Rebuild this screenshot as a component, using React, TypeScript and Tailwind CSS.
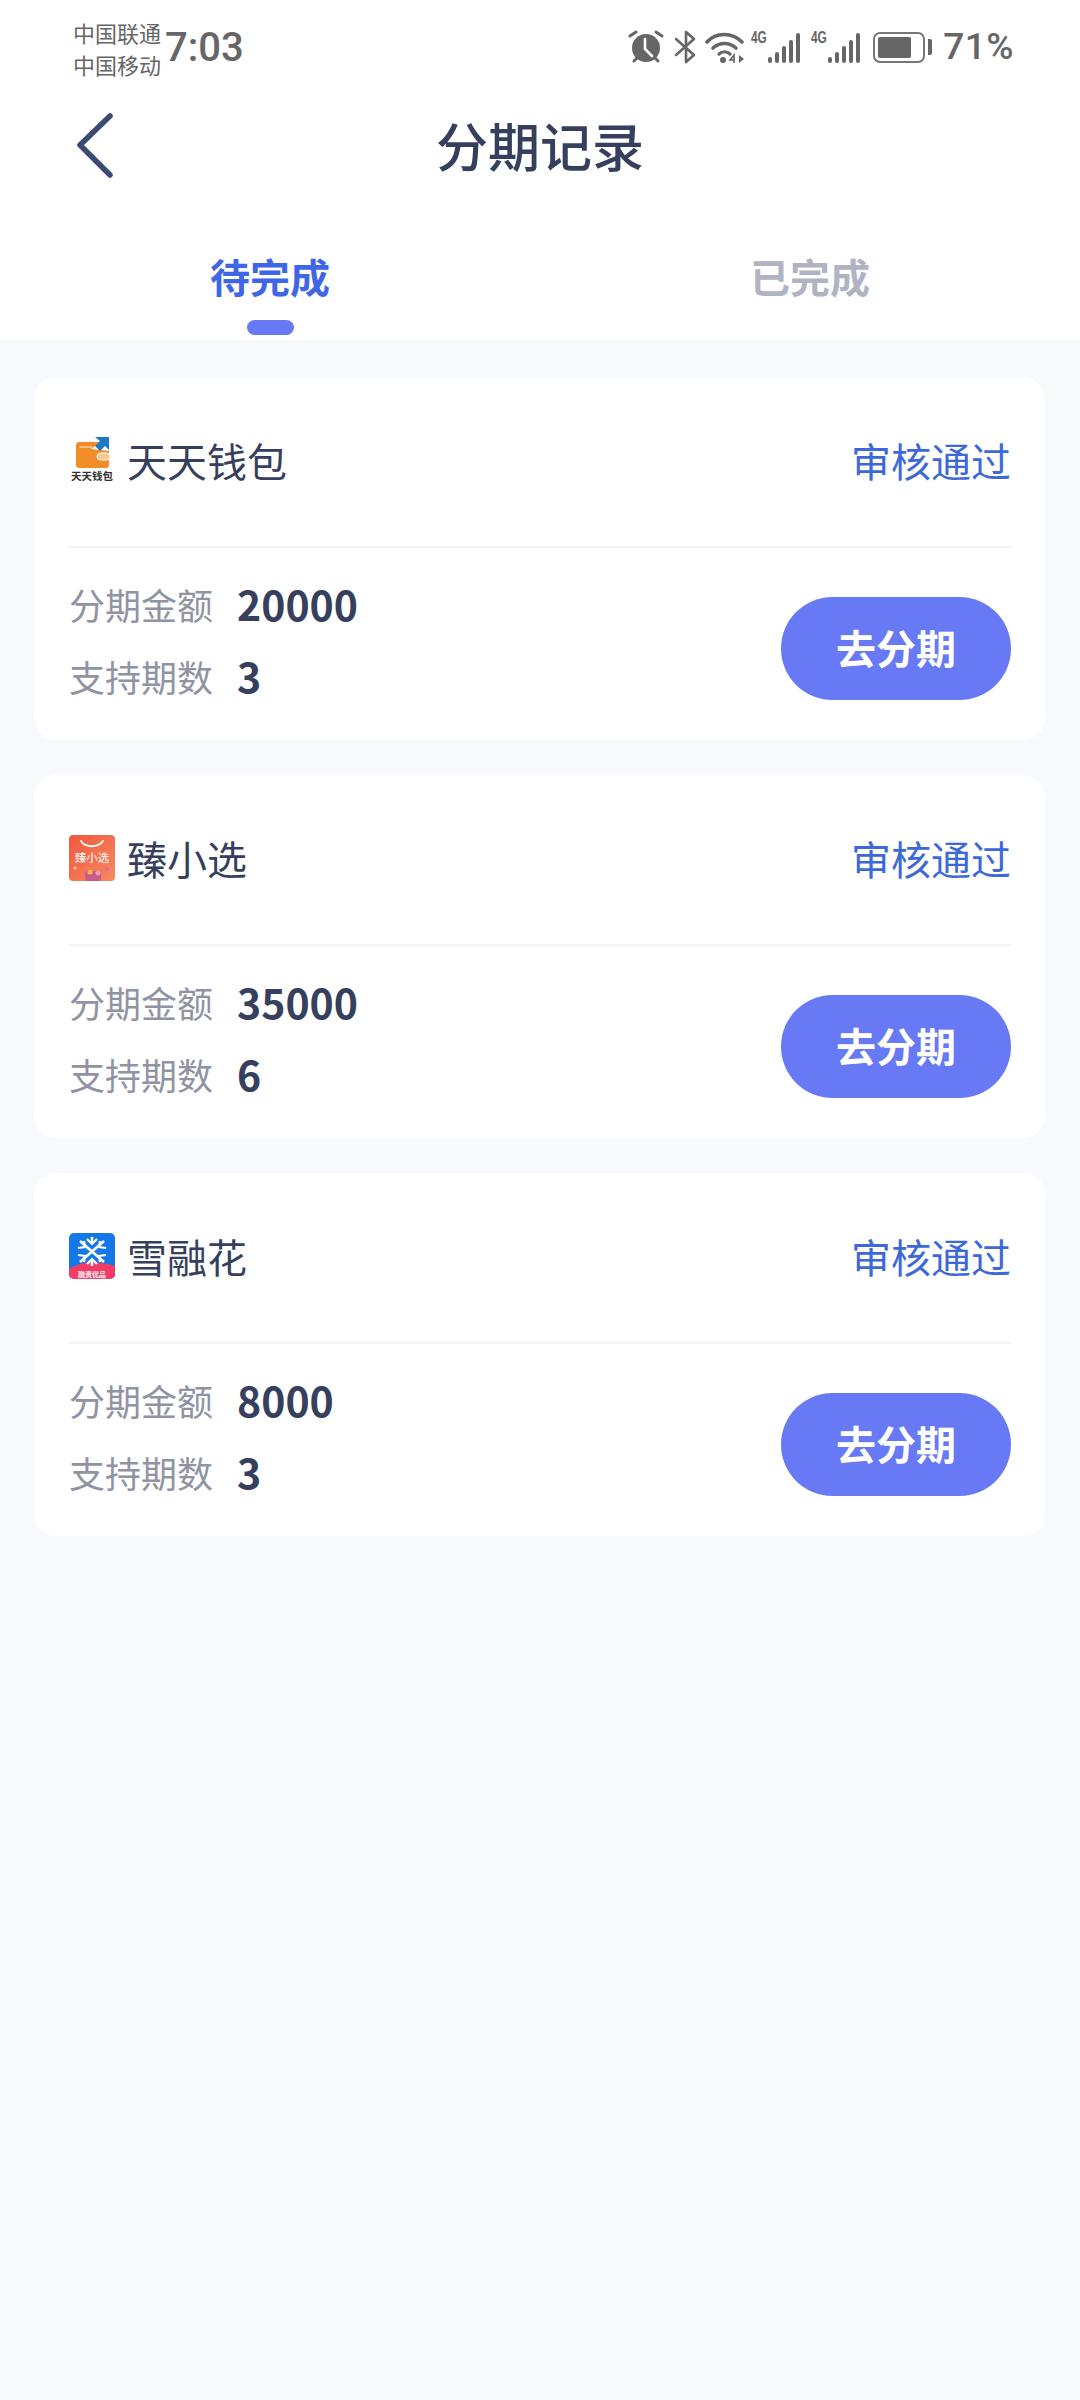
const fontStack = { fontFamily: '"Noto Sans CJK SC", "Noto Sans", sans-serif' };

// ====== Status bar icons ======
const AlarmIcon = () => (
  <svg width="36" height="34" viewBox="0 0 36 34" fill="none">
    <circle cx="18" cy="18" r="14" fill="#666" />
    <path d="M17 9v10l7 7" stroke="#fff" strokeWidth="2.6" strokeLinecap="round" />
    <path d="M2 6l6-4M34 6l-6-4M6 31l3-3M30 31l-3-3" stroke="#666" strokeWidth="3" strokeLinecap="round" />
  </svg>
);

const BluetoothIcon = () => (
  <svg width="22" height="34" viewBox="0 0 22 34" fill="none">
    <path d="M2 9l18 16-8 7V2l8 7L2 25" stroke="#666" strokeWidth="2.6" strokeLinejoin="round" strokeLinecap="round" />
  </svg>
);

const WifiIcon = () => (
  <svg width="40" height="32" viewBox="0 0 40 32" fill="none">
    <path d="M2 11C11 1 27 1 37 11" stroke="#666" strokeWidth="3.6" strokeLinecap="round" />
    <path d="M8 17c7-6 16-6 23 0" stroke="#666" strokeWidth="3.6" strokeLinecap="round" />
    <path d="M14 23c3-3 8-3 11 0" stroke="#666" strokeWidth="3.2" strokeLinecap="round" />
    <circle cx="18" cy="29" r="3" fill="#666" />
    <path d="M29 32V24l-4 5h5" stroke="#666" strokeWidth="1.6" />
    <path d="M34 24l5 4-5 4z" fill="#666" />
  </svg>
);

const SignalIcon = () => (
  <div className="relative h-[32px] w-[32px]">
    <span
      className="absolute left-[-17px] top-[-1px] origin-left text-[17px] leading-[15px] font-bold text-[#666]"
      style={{ fontFamily: '"Liberation Sans", sans-serif', transform: "scaleX(0.7)" }}
    >
      4G
    </span>
    <div className="flex h-full items-end gap-[3px]">
      <div className="h-[6px] w-[4px] rounded-full bg-[#666]" />
      <div className="h-[11px] w-[4px] rounded-full bg-[#666]" />
      <div className="h-[17px] w-[4px] rounded-full bg-[#666]" />
      <div className="h-[23px] w-[4px] rounded-full bg-[#666]" />
      <div className="h-[30px] w-[4px] rounded-full bg-[#666]" />
    </div>
  </div>
);

const BatteryIcon = () => (
  <div className="flex items-center gap-[3px]">
    <div className="h-[31px] w-[52px] rounded-[7px] border-2 border-[#777] p-[3px]">
      <div className="h-full w-[33px] rounded-[2px] bg-[#666]" />
    </div>
    <div className="h-[16px] w-[4px] rounded-r-[2px] bg-[#666]" />
  </div>
);

// ====== Card logos ======
const WalletLogo = () => (
  <svg width="46" height="46" viewBox="0 0 46 46" className="shrink-0">
    <rect x="7" y="5" width="33" height="26" rx="3" fill="#f28c28" />
    <path d="M10 10h13" stroke="#fcdcb4" strokeWidth="1.2" />
    <path d="M22 12l4-3h14v5z" fill="#fff" />
    <path d="M26 0h14v13l-4-4-5 5-5-5 5-5z" fill="#1d78c4" />
    <rect x="28" y="16" width="13" height="7" rx="3.5" fill="#f9c88f" stroke="#fff" strokeWidth="1" />
    <text x="23" y="43" textAnchor="middle" fontSize="10.5" fontWeight="700" fill="#333" style={fontStack}>
      天天钱包
    </text>
  </svg>
);

const ZhenLogo = () => (
  <svg width="46" height="46" viewBox="0 0 46 46" className="shrink-0">
    <defs>
      <linearGradient id="zhen" x1="0" y1="0" x2="1" y2="1">
        <stop offset="0" stopColor="#f0583e" />
        <stop offset="1" stopColor="#f98a62" />
      </linearGradient>
    </defs>
    <rect width="46" height="46" rx="4" fill="url(#zhen)" />
    <path d="M12 6c4 7 17 7 22 0" fill="none" stroke="#fff" strokeWidth="1.8" strokeLinecap="round" />
    <text x="23" y="27" textAnchor="middle" fontSize="11.5" fill="#fff" style={fontStack}>
      臻小选
    </text>
    <circle cx="6" cy="33" r="1.5" fill="#ffd0c0" />
    <circle cx="38" cy="34" r="2" fill="#e86a9a" />
    <rect x="16" y="36" width="16" height="10" rx="2" fill="#c95a8a" />
    <circle cx="21" cy="37" r="2.5" fill="#f8b74e" />
    <circle cx="29" cy="38" r="2.5" fill="#f49ab5" />
  </svg>
);

const SnowLogo = () => (
  <svg width="46" height="46" viewBox="0 0 46 46" className="shrink-0">
    <rect width="46" height="46" rx="5" fill="#1478e8" />
    <path d="M0 36c12-8 30-8 46-3v8a5 5 0 0 1-5 5H5a5 5 0 0 1-5-5z" fill="#f23c64" />
    <path d="M11 8l24 21M35 8L11 29M23 4v6M23 27v6" stroke="#fff" strokeWidth="2.6" fill="none" />
    <path d="M18 6l5 5 5-5M18 31l5-5 5 5M9 15l7-1-1-6M37 15l-7-1 1-6M9 22l7 1-1 6M37 22l-7 1 1 6" stroke="#fff" strokeWidth="2.2" fill="none" />
    <text x="23" y="44" textAnchor="middle" fontSize="7" fontWeight="700" fill="#fff" style={fontStack}>
      融资优品
    </text>
  </svg>
);

const records = [
  { name: "天天钱包", Logo: WalletLogo, amount: "20000", periods: "3" },
  { name: "臻小选", Logo: ZhenLogo, amount: "35000", periods: "6" },
  { name: "雪融花", Logo: SnowLogo, amount: "8000", periods: "3" },
];

export default function App() {
  return (
    <div className="flex min-h-[2400px] w-[1080px] flex-col bg-[#f8f9fd]" style={fontStack}>
      <div className="bg-white">
        {/* status bar */}
        <div className="flex h-[90px] items-start justify-between pl-[73px] pr-[66px] pt-[16px]">
          <div className="flex items-center gap-[4px]">
            <div className="text-[22px] leading-[32px] text-[#666]">
              <div>中国联通</div>
              <div>中国移动</div>
            </div>
            <span className="text-[40px] leading-[64px] font-medium text-[#666]" style={{ fontFamily: "Roboto, sans-serif" }}>
              7:03
            </span>
          </div>
          <div className="flex h-[62px] items-center">
            <AlarmIcon />
            <div className="ml-[10px]"><BluetoothIcon /></div>
            <div className="ml-[9px]"><WifiIcon /></div>
            <div className="ml-[23px]"><SignalIcon /></div>
            <div className="ml-[28px]"><SignalIcon /></div>
            <div className="ml-[13px]"><BatteryIcon /></div>
            <span className="ml-[11px] text-[37px] font-medium tracking-[0.5px] text-[#666]" style={{ fontFamily: "Roboto, sans-serif" }}>
              71%
            </span>
          </div>
        </div>

        {/* title bar */}
        <div className="relative flex h-[110px] items-center justify-center">
          <svg width="40" height="68" viewBox="0 0 40 68" fill="none" className="absolute left-[76px] top-[23px]">
            <path d="M34 3L4 32l30 30" stroke="#3a4a75" strokeWidth="5.5" strokeLinecap="round" strokeLinejoin="round" />
          </svg>
          <h1 className="text-[52px] leading-[70px] font-medium text-[#373f5e]">分期记录</h1>
        </div>

        {/* tabs */}
        <div className="flex h-[140px]">
          <div className="flex w-[540px] flex-col items-center pt-[46px]">
            <span className="text-[40px] leading-[60px] font-bold text-[#3f66e6]">待完成</span>
            <div className="mt-[14px] h-[15px] w-[47px] rounded-full bg-[#6779f5]" />
          </div>
          <div className="flex w-[540px] flex-col items-center pt-[46px]">
            <span className="text-[40px] leading-[60px] font-bold text-[#b0b4c2]">已完成</span>
          </div>
        </div>
      </div>

      {/* records */}
      <div className="flex flex-col gap-[35px] pl-[34px] pt-[37px]">
        {records.map(({ name, Logo, amount, periods }) => (
          <div key={name} className="h-[363px] w-[1011px] rounded-[22px] bg-white pl-[35px] pr-[34px]">
            <div className="flex h-[171px] items-center justify-between border-b-2 border-[#f3f4f7] pb-[3px]">
              <div className="flex items-center gap-[12px]">
                <Logo />
                <span className="text-[40px] leading-[56px] text-[#373f5e]">{name}</span>
              </div>
              <span className="text-[40px] leading-[56px] text-[#3d69d8]">审核通过</span>
            </div>
            <div className="flex items-start justify-between">
              <div className="pt-[29px]">
                <div className="flex h-[54px] items-center gap-[24px]">
                  <span className="text-[36px] text-[#8f93a3]">分期金额</span>
                  <span className="text-[41px] font-bold text-[#373f5e]">{amount}</span>
                </div>
                <div className="mt-[18px] flex h-[54px] items-center gap-[24px]">
                  <span className="text-[36px] text-[#8f93a3]">支持期数</span>
                  <span className="text-[41px] font-bold text-[#373f5e]">{periods}</span>
                </div>
              </div>
              <button className="mt-[49px] flex h-[103px] w-[230px] items-center justify-center rounded-full bg-[#6779f5] pb-[3px] text-[40px] font-bold text-white">
                去分期
              </button>
            </div>
          </div>
        ))}
      </div>
    </div>
  );
}
